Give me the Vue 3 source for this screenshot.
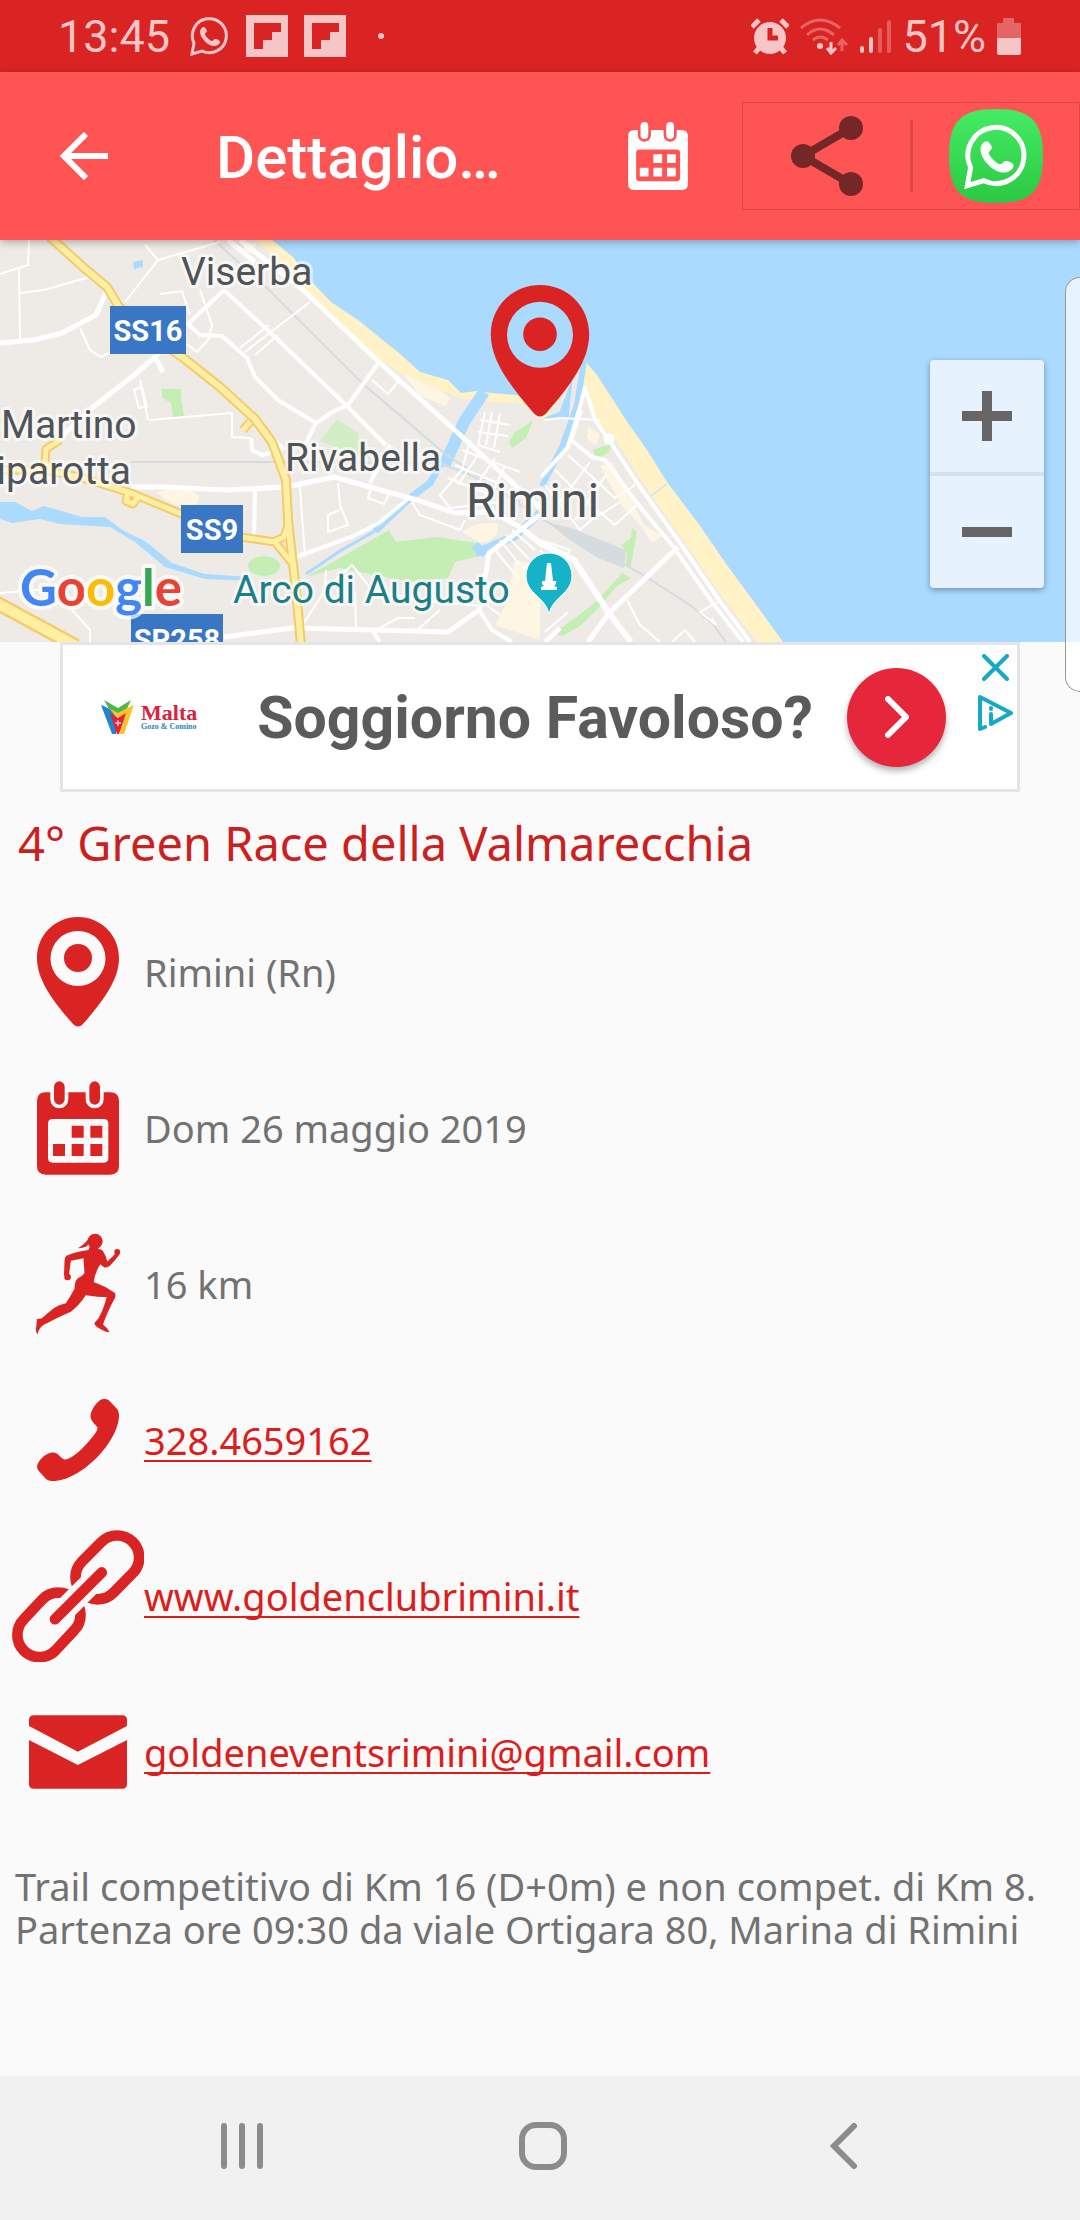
<template>
  <div class="page">
    <!-- shared icon shapes -->
    <svg class="sprite" aria-hidden="true">
      <symbol id="pin" viewBox="0 0 82 110">
        <path
          fill="currentColor"
          fill-rule="evenodd"
          d="M41 0C18 0 0 18 0 41C0 63 16 84 36 107Q41 112 46 107C66 84 82 63 82 41C82 18 64 0 41 0ZM41 14A27 27 0 1 1 41 69A27 27 0 1 1 41 14Z"
        />
        <circle cx="41" cy="41" r="14" fill="currentColor" />
      </symbol>
      <symbol id="calendar" viewBox="0 0 246 280">
        <path
          fill="currentColor"
          fill-rule="evenodd"
          d="M26 33H220Q246 33 246 59V254Q246 280 220 280H26Q0 280 0 254V59Q0 33 26 33ZM47 113Q33 113 33 127V230Q33 244 47 244H200Q214 244 214 230V127Q214 113 200 113Z"
        />
        <path class="cut" d="M67 16V54M173 16V54" stroke-width="54" stroke-linecap="round" />
        <path d="M67 16V54M173 16V54" stroke="currentColor" stroke-width="32" stroke-linecap="round" />
        <path
          fill="currentColor"
          d="M104 133h36v36h-36zM160 133h36v36h-36zM48 188h36v36h-36zM104 188h36v36h-36zM160 188h36v36h-36z"
        />
      </symbol>
      <symbol id="runner" viewBox="0 0 257 308">
        <circle cx="180" cy="25" r="23" fill="currentColor" />
        <circle cx="97" cy="133" r="10" fill="currentColor" />
        <circle cx="247" cy="57" r="9" fill="currentColor" />
        <path fill="currentColor" d="M164 12Q150 34 128 46Q144 46 156 40Q156 34 166 30Z" />
        <path
          fill="currentColor"
          d="M166 36L160 51Q122 56 95 68Q88 72 88 82L86 128H101L107 84L145 76L148 120Q146 128 126 138Q118 148 118 168Q106 190 92 212Q70 216 54 228L18 258L4 260L3 280Q-2 294 6 306Q10 288 24 278Q70 254 107 238Q134 216 152 188Q190 194 215 194Q206 230 190 258L178 272Q178 282 200 292Q214 300 224 300Q218 286 204 276Q216 240 240 196Q244 184 238 180Q210 160 176 148Q180 118 196 94L208 104Q216 106 224 100Q242 82 254 64L243 60Q232 74 217 86Q212 66 204 54Q200 48 190 48V36Z"
        />
      </symbol>
      <symbol id="phone" viewBox="0 0 245 245">
        <path
          fill="currentColor"
          d="M188 4C196 -1 208 -1 216 5L236 26C243 33 245 40 245 50C243 130 130 245 48 245C38 245 32 243 26 238L6 216C-1 208 -1 200 3 192C12 176 28 162 45 160C62 158 66 172 80 180C90 184 110 172 135 148C160 122 180 100 181 86C176 76 160 66 160 52C160 36 174 14 188 4Z"
        />
      </symbol>
      <symbol id="link" viewBox="0 0 394 395">
        <g fill="none" stroke="currentColor" stroke-width="32">
          <path d="M209 94L267 36A66 66 0 0 1 361 129L303 188A66 66 0 0 1 209 94Z" />
          <path d="M35 267L91 207A66 66 0 0 1 185 301L129 361A66 66 0 0 1 35 267Z" />
        </g>
        <path class="cut" d="M140 255L255 140" stroke-width="68" />
        <path d="M128 267L268 127" stroke="currentColor" stroke-width="32" stroke-linecap="round" />
      </symbol>
      <symbol id="mail" viewBox="0 0 293 220">
        <path
          fill="currentColor"
          d="M14 0H279Q293 0 293 14V32L146 109L0 32V14Q0 0 14 0ZM0 74L146 149L293 74V206Q293 220 279 220H14Q0 220 0 206Z"
        />
      </symbol>
      <symbol id="whatsapp" viewBox="0 0 40 40">
        <path d="M2 38L4 27A17 17 0 1 1 12 35Z" fill="none" stroke="currentColor" stroke-width="3" />
        <path
          fill="currentColor"
          d="M14 11C12 11 10 13 10 16C10 22 18 30 24 30C27 30 30 28 30 26C30 24 27 23 25 23C24 23 23 25 22 25C20 25 15 20 15 18C15 17 17 16 17 15C17 14 15 11 14 11Z"
        />
      </symbol>
      <symbol id="flip" viewBox="0 0 42 42">
        <path fill="currentColor" fill-rule="evenodd" d="M0 0H42V42H0ZM8 8V34H17V25H26V17H35V8Z" />
      </symbol>
    </svg>

    <div class="status-bar">
      <div class="status-left">
        <span>13:45</span>
        <svg class="st-whatsapp"><use href="#whatsapp" /></svg>
        <svg class="st-flip"><use href="#flip" /></svg>
        <svg class="st-flip"><use href="#flip" /></svg>
        <i class="st-dot"></i>
      </div>
      <div class="status-right">
        <svg width="38" height="37" viewBox="0 0 38 37" fill="currentColor">
          <path d="M8 30L4 35M30 30L34 35" stroke="currentColor" stroke-width="5" />
          <path d="M1 9L8 2M37 9L30 2" stroke="currentColor" stroke-width="5" />
          <circle cx="19" cy="20" r="16" />
          <path class="st-hands" d="M19 10V20H27" fill="none" stroke-width="5" />
        </svg>
        <svg width="48" height="37" viewBox="0 0 48 37" fill="none" stroke="currentColor" stroke-width="3">
          <g opacity="0.4">
            <path d="M1 10Q20 -6 40 10M7 17Q20 5 34 17M13 22Q20 16 28 22" />
            <path d="M42 33V22M38 27L42 22L47 27" />
          </g>
          <circle cx="20" cy="28" r="3" fill="currentColor" stroke="none" />
          <path d="M31 24V35M27 30L31 35L36 30" />
        </svg>
        <svg width="32" height="36" viewBox="0 0 32 36" stroke="currentColor" stroke-width="4" stroke-linecap="round">
          <path d="M3 30V33M12 21V33" />
          <path d="M21 12V33M30 4V33" opacity="0.35" />
        </svg>
        <span>51%</span>
        <svg width="24" height="37" viewBox="0 0 24 37" fill="currentColor">
          <path d="M6 0H17V5H24V20H0V5H6Z" opacity="0.4" />
          <path d="M0 20H24V35Q24 37 22 37H2Q0 37 0 35Z" />
        </svg>
      </div>
    </div>

    <header class="toolbar">
      <button class="tool back" aria-label="Indietro">
        <svg width="48" height="48" viewBox="0 0 48 48" fill="none" stroke="currentColor" stroke-width="6">
          <path d="M48 24H5M26 2L4 24L26 46" />
        </svg>
      </button>
      <h1>Dettaglio…</h1>
      <button class="tool cal" aria-label="Calendario">
        <svg><use href="#calendar" /></svg>
      </button>
      <div class="share-box">
        <button class="tool share" aria-label="Condividi">
          <svg width="72" height="80" viewBox="0 0 72 80" fill="currentColor">
            <path d="M60 12L12 40L60 68" fill="none" stroke="currentColor" stroke-width="8" />
            <circle cx="60" cy="12" r="12" />
            <circle cx="12" cy="40" r="12" />
            <circle cx="60" cy="68" r="12" />
          </svg>
        </button>
        <button class="tool whatsapp" aria-label="WhatsApp">
          <svg width="94" height="94" viewBox="0 0 94 94">
            <defs>
              <linearGradient id="green" x1="0" y1="0" x2="0" y2="1">
                <stop offset="0" stop-color="#45ec63" />
                <stop offset="1" stop-color="#2bc944" />
              </linearGradient>
            </defs>
            <path fill="url(#green)" d="M47 0C82 0 94 12 94 47C94 82 82 94 47 94C12 94 0 82 0 47C0 12 12 0 47 0Z" />
            <use href="#whatsapp" x="15" y="14" width="66" height="66" />
          </svg>
        </button>
      </div>
    </header>

    <main>
      <section class="map">
        <svg class="map-canvas" viewBox="0 0 1080 402" preserveAspectRatio="xMidYMid slice">
          <rect width="1080" height="402" fill="#abdaff" />
          <!-- beach, then land -->
          <path
            fill="#fff2c6"
            d="M0 0H272L293 17L310 40L331 62L358 80L379 97L399 113L420 132L448 140L461 153L476 151L491 153L517 155L545 175L585 121L597 135L626 180L647 210L667 242L698 283L729 328L760 370L783 402H0Z"
          />
          <path
            fill="#eeebe6"
            d="M0 0H255L293 33L312 60L379 120L413 140L458 157L472 160L492 162L520 163L545 180L583 122L584 140L593 177L616 200L643 243L678 293L719 353L757 402H0Z"
          />
          <g fill="#c5eeb4">
            <path d="M306 337L340 318L375 298L389 290L396 302L436 297L477 303L482 315L455 322L448 338L410 342L340 328Z" />
            <ellipse cx="264" cy="326" rx="16" ry="10" />
            <path d="M162 149H181V160L184 176L173 177L171 163L162 158Z" />
            <path d="M509 202L515 192L525 186L533 180L526 198L512 208Z" />
            <path d="M632 288L637 292L633 315L630 328L626 326L627 312L621 305L631 298Z" />
            <path d="M631 338L622 333L598 360L578 376L554 393L562 396L580 386L600 366L617 346Z" />
            <path d="M593 210L611 204L609 212L596 220Z" />
            <path d="M320 201L337 179L358 193L360 206L372 220L330 205Z" opacity="0.65" />
          </g>
          <g fill="#fff5e3">
            <path d="M156 252Q190 245 199 256Q200 270 172 264Z" />
            <path d="M462 292Q478 280 498 284Q500 300 480 303Z" />
            <path d="M403 134L440 150L450 158L446 166L420 156Z" />
            <path d="M248 2L256 4L252 14L242 10Z" />
            <path d="M588 187L600 194L596 205L587 198ZM600 226L612 222L628 252L644 285L662 296L652 303L640 285L622 266Z" />
            <path d="M515 320L540 325V400L495 385L505 365Z" />
          </g>
          <path fill="#d5dbde" d="M547 282L574 289L598 299L626 310L624 328L598 318L570 300Z" />
          <!-- rivers and canal -->
          <g fill="none" stroke="#abdaff" stroke-linejoin="round">
            <path
              fill="#abdaff"
              stroke="none"
              d="M0 262L15 262L32 271L44 266L82 277H105L124 291L145 301L172 323L205 334L250 337L250 341L205 339L165 327L135 302L110 287L60 284L40 279L12 283L0 279Z"
            />
            <path d="M306 334L340 311L375 291" stroke-width="3" />
            <path d="M375 291L410 258L430 243L442 222" stroke-width="7" />
            <path d="M444 226L464 182L484 152" stroke-width="12" />
            <path d="M540 273L515 296L476 313" stroke-width="8" />
            <path d="M584 121L577 165L562 207L542 246" stroke-width="6" />
            <path d="M545 178L560 172L572 140L568 178Z" fill="#abdaff" />
            <path d="M651 256L667 244" stroke-width="1" />
          </g>
          <path fill="#abdaff" d="M133 22L143 20V27L134 29ZM471 308L478 302L489 312L482 317Z" />
          <!-- railway -->
          <g fill="none" stroke="#d5dbde" stroke-width="2">
            <path d="M214 0L269 50L362 143L444 213L540 278L640 333L690 365L712 383L726 402" />
            <path d="M131 222H286L440 223L470 235L520 262" />
          </g>
          <!-- minor streets -->
          <g fill="none" stroke="#fff" stroke-width="2">
            <path d="M0 34L28 25L29 0M19 28L20 100M20 53L44 50L90 37M80 88L90 110L101 117L134 100" />
            <path d="M145 5L158 20L125 62M158 20L220 2M160 54L182 51L190 75M200 50L212 85L208 100L197 112L187 104" />
            <path d="M310 62L245 112M269 85L240 108M379 122L398 142L388 154L372 140M278 95L255 115" />
            <path d="M150 180L232 173V197L250 198M140 140L148 180M134 150L142 147L147 166L139 168Z" />
            <path d="M300 247L305 317M338 243L340 265L348 285L328 292V275L340 270" />
            <path d="M372 245L368 258L384 264L390 252M412 262L420 275L460 290L465 280" />
            <path d="M0 353L60 348L72 370L90 390V402" />
            <path d="M485 172L478 205L500 212M492 172L486 205M500 173L494 208M480 180L510 185M478 192L508 196M470 200L462 230L440 255L450 268L500 262" />
            <path d="M462 210L520 232M455 225L505 246M448 238L488 254M480 212L458 245M495 218L470 255M505 226L488 262" />
            <path d="M568 215L615 258L635 245M555 230L600 275L620 262M545 245L580 290L600 272M590 222L560 262M606 235L575 280M615 285L640 262M600 272L615 285" />
            <path d="M500 300L520 325M506 295L530 320M512 290L535 310M495 310L520 340M520 330L540 318M540 300L570 310L560 325M540 310L550 320" />
            <path d="M627 360L640 385L660 402M718 362L700 372L716 385L712 378M672 402L685 390L695 402M545 392L568 372M500 375L480 360" />
            <path d="M326 330L325 350M325 350L302 386M355 352L356 390M330 345L352 325L372 350L420 360L480 366M600 180L560 178L545 180" />
            <path d="M415 378H398L376 390M440 370L415 392" />
          </g>
          <!-- main streets -->
          <g fill="none" stroke="#fff" stroke-width="4" stroke-linejoin="round">
            <path d="M228 0L255 22M240 0L303 50L379 122L458 193L517 247L540 268" stroke-width="5" />
            <path d="M224 50L275 97L348 167L386 205" />
            <path d="M224 50L188 84L200 95L222 96L247 118L255 137L278 160L316 183L306 203" />
            <path d="M316 183L334 171L348 165L379 122" />
            <path d="M0 103L34 100L62 93L96 75L107 50" stroke-width="5" />
            <path d="M165 107L155 117L134 135L93 167L58 200M155 117L163 132" stroke-width="5" />
            <path d="M131 247L165 247L227 250L286 247L334 237L417 260L455 273L492 272L520 287" stroke-width="5" />
            <path d="M296 317L351 297L379 283L410 257M370 243L390 205" />
            <path d="M255 250L254 297M260 183L275 200L284 210M251 198L252 210L262 215L275 212" />
            <path d="M224 397L293 388L372 390L448 392L479 370L486 333L489 313L520 290L540 275" stroke-width="5" />
            <path d="M372 390L380 402M479 370L492 390L512 402" />
            <path d="M520 287L540 303L574 320L609 373L631 402" stroke-width="6" />
            <path d="M541 237L568 207L581 163L585 147L595 180L609 200L640 247L678 300L719 360L750 402" />
            <path d="M581 170L571 200L592 217L605 220L640 267L672 305L712 362L743 402" />
            <path d="M678 307L609 373L588 402M545 402L560 388" stroke-width="5" />
            <circle cx="609" cy="199" r="4" stroke-width="3" />
          </g>
          <!-- state roads -->
          <g fill="none" stroke-linejoin="round">
            <g stroke="#f3cb6b">
              <path :d="ss16" stroke-width="10" />
              <path :d="ss9" stroke-width="9" />
              <path d="M-5 362L76 406" stroke-width="15" />
            </g>
            <g stroke="#ffefa3">
              <path :d="ss16" stroke-width="6" />
              <path :d="ss9" stroke-width="5" />
              <path d="M-5 362L76 406" stroke-width="10" />
            </g>
          </g>
          <g class="badges">
            <rect x="110" y="66" width="76" height="48" />
            <rect x="181" y="265" width="62" height="48" />
            <rect x="131" y="374" width="92" height="48" />
            <text x="148" y="101">SS16</text>
            <text x="212" y="300">SS9</text>
            <text x="177" y="410">SP258</text>
          </g>
          <g class="places">
            <text x="181" y="45">Viserba</text>
            <text x="1" y="198">Martino</text>
            <text x="131" y="244" text-anchor="end">iparotta</text>
            <text x="285" y="231">Rivabella</text>
            <text x="466" y="277" class="city">Rimini</text>
            <text x="233" y="363" class="poi">Arco di Augusto</text>
          </g>
          <path
            fill="#15b2c8"
            stroke="#fff"
            stroke-width="1"
            d="M549 313C562 313 572 323 572 336C572 354 553 356 549 374C545 356 526 354 526 336C526 323 536 313 549 313Z"
          />
          <path fill="#fff" d="M547 323H551L553 341H556V344L554 346L557 347V350H541V347L544 346L542 344V341H545Z" />
          <text class="google" x="20" y="366">
            <tspan fill="#4285f4">G</tspan><tspan fill="#ea4335">o</tspan><tspan fill="#fbbc05">o</tspan><tspan fill="#4285f4">g</tspan><tspan fill="#34a853">l</tspan><tspan fill="#ea4335">e</tspan>
          </text>
          <use class="marker" href="#pin" x="490" y="45" width="100" height="132" />
        </svg>
        <div class="zoom">
          <button aria-label="Zoom avanti" @click="zoom++">
            <svg width="50" height="50" viewBox="0 0 50 50"><path d="M0 25H50M25 0V50" /></svg>
          </button>
          <button aria-label="Zoom indietro" @click="zoom--">
            <svg width="50" height="50" viewBox="0 0 50 50"><path d="M0 25H50" /></svg>
          </button>
        </div>
      </section>

      <aside class="ad">
        <div class="ad-brand">
          <svg width="34" height="34" viewBox="0 0 34 34">
            <path fill="#1f86c7" d="M0 5L15 14V34H11Z" />
            <path fill="#fbc52d" d="M33 5L19 14V34H23Z" />
            <path fill="#4db848" d="M3 0L17 8L30 0L25 11L17 16L9 11Z" />
            <path fill="#1f86c7" d="M1 5L12 11L17 16L12 20Z" />
            <path fill="#fbc52d" d="M9 9L17 13L32 5L24 20L15 17Z" />
            <path fill="#e0223c" d="M9 13L17 18L25 13L18 34H16Z" />
            <path stroke="#fff" stroke-width="1" d="M17 20V26M14 23H20" />
          </svg>
          <div class="ad-name">
            <b>Malta</b>
            <small>Gozo &amp; Comino</small>
          </div>
        </div>
        <strong class="ad-text">Soggiorno Favoloso?</strong>
        <button class="ad-go" aria-label="Apri">
          <svg width="24" height="42" viewBox="0 0 24 42"><path d="M3 3L21 21L3 39" /></svg>
        </button>
        <div class="ad-choices">
          <button aria-label="Chiudi">
            <svg width="27" height="27" viewBox="0 0 27 27" stroke-linecap="round"><path d="M2 2L25 25M25 2L2 25" /></svg>
          </button>
          <button aria-label="Informazioni">
            <svg width="35" height="36" viewBox="0 0 35 36" stroke-linejoin="round" stroke-linecap="round">
              <path d="M7 32L2 34V2L33 18L13 29V19M13 13V14" />
            </svg>
          </button>
        </div>
      </aside>

      <h2>{{ race.title }}</h2>

      <ul class="details">
        <li v-for="row in race.rows" :key="row.icon">
          <span class="icon"><svg :class="'ic-' + row.icon"><use :href="'#' + row.icon" /></svg></span>
          <a v-if="row.href" :href="row.href">{{ row.text }}</a>
          <span v-else>{{ row.text }}</span>
        </li>
      </ul>

      <p class="description">
        <template v-for="line in race.description" :key="line">{{ line }}<br /></template>
      </p>

      <div class="edge-handle"></div>
    </main>

    <nav class="nav-bar">
      <button aria-label="Recenti">
        <svg width="42" height="46" viewBox="0 0 42 46"><path d="M3 3V43M21 3V43M39 3V43" /></svg>
      </button>
      <button aria-label="Home">
        <svg width="48" height="48" viewBox="0 0 48 48"><rect x="3" y="3" width="42" height="42" rx="14" /></svg>
      </button>
      <button aria-label="Indietro">
        <svg width="27" height="46" viewBox="0 0 27 46"><path d="M24 3L4 23L24 43" /></svg>
      </button>
    </nav>
  </div>
</template>

<script setup>
import { reactive, ref } from 'vue'

const zoom = ref(12)

// strade statali disegnate due volte: bordo e riempimento
const ss16 =
  'M50 -3L83 27L107 47L119 67L172 110L186 120L220 147L255 179L272 202L286 240L288 280L291 307L296 350L301 405'
const ss9 =
  'M-3 230H45L79 237L131 253L179 273L241 297L275 302L291 322M60 200L46 209L45 222L56 232M128 253L126 261L133 264L138 257M288 285L284 297L275 301M250 182L243 190'

const race = reactive({
  title: '4° Green Race della Valmarecchia',
  rows: [
    { icon: 'pin', text: 'Rimini (Rn)' },
    { icon: 'calendar', text: 'Dom 26 maggio 2019' },
    { icon: 'runner', text: '16 km' },
    { icon: 'phone', text: '328.4659162', href: 'tel:3284659162' },
    { icon: 'link', text: 'www.goldenclubrimini.it', href: 'http://www.goldenclubrimini.it' },
    { icon: 'mail', text: 'goldeneventsrimini@gmail.com', href: 'mailto:goldeneventsrimini@gmail.com' },
  ],
  description: [
    'Trail competitivo di Km 16 (D+0m) e non compet. di Km 8.',
    'Partenza ore 09:30 da viale Ortigara 80, Marina di Rimini',
  ],
})
</script>

<style>
body {
  margin: 0;
  background: #fafafa;
}
</style>

<style scoped>
.page {
  --cut: #fafafa;
  display: flex;
  flex-direction: column;
  min-height: 100vh;
  font-family: Roboto, sans-serif;
}

svg {
  display: block;
  flex: none;
}

button {
  display: flex;
  align-items: center;
  justify-content: center;
  padding: 0;
  border: 0;
  background: none;
  color: inherit;
  cursor: pointer;
}

.sprite {
  position: absolute;
  width: 0;
  height: 0;
}

.cut {
  stroke: var(--cut);
}

/* status bar */
.status-bar {
  display: flex;
  justify-content: space-between;
  align-items: center;
  height: 72px;
  padding: 0 59px 0 58px;
  background: #da2424;
  color: #f6c5c5;
  font-size: 45px;
}

.status-left,
.status-right {
  display: flex;
  align-items: center;
}

.status-left {
  gap: 16px;
}

.status-right {
  gap: 11px;
}

.st-whatsapp {
  width: 40px;
  height: 40px;
  margin-left: 4px;
}

.st-flip {
  width: 42px;
  height: 42px;
}

.st-dot {
  width: 6px;
  height: 6px;
  margin-left: 16px;
  border-radius: 50%;
  background: currentColor;
}

.st-hands {
  stroke: #da2424;
}

/* toolbar */
.toolbar {
  --cut: #ff5454;
  position: relative;
  z-index: 1;
  display: flex;
  align-items: center;
  height: 168px;
  background: #ff5454;
  color: #fff;
  box-shadow: 0 2px 8px rgba(0, 0, 0, 0.3);
}

.back {
  width: 168px;
  height: 168px;
}

h1 {
  flex: 1;
  margin: 0 0 0 48px;
  padding-top: 4px;
  font-size: 60px;
  font-weight: 500;
  line-height: 72px;
}

.cal {
  width: 168px;
  height: 168px;
}

.cal svg {
  width: 60px;
  height: 68px;
}

.share-box {
  display: flex;
  align-items: center;
  box-sizing: border-box;
  width: 338px;
  height: 108px;
  border: 1px solid #dc4848;
}

.share {
  box-sizing: border-box;
  flex: 1;
  height: 72px;
  border-right: 3px solid #dc4848;
  color: #752627;
}

.whatsapp {
  width: 166px;
  height: 106px;
}

/* map */
main {
  position: relative;
  flex: 1;
}

.map {
  position: relative;
  height: 402px;
}

.map-canvas {
  width: 100%;
  height: 100%;
}

.badges rect {
  fill: #3977c5;
}

.badges text {
  fill: #fff;
  font-size: 29px;
  font-weight: 700;
  text-anchor: middle;
}

.places text {
  fill: #4f5459;
  font-size: 39px;
  stroke: rgba(255, 255, 255, 0.6);
  stroke-width: 6px;
  stroke-linejoin: round;
  paint-order: stroke;
}

.places .city {
  font-size: 48px;
}

.places .poi {
  fill: #1b7f88;
}

.google {
  font-family: Lato, sans-serif;
  font-size: 51px;
  font-weight: 700;
  stroke: rgba(255, 255, 255, 0.7);
  stroke-width: 8px;
  stroke-linejoin: round;
  paint-order: stroke;
}

.marker {
  color: #da2424;
}

.zoom {
  position: absolute;
  right: 36px;
  bottom: 54px;
  width: 114px;
  border-radius: 4px;
  background: #e6f3ff;
  box-shadow: 0 2px 6px rgba(0, 0, 0, 0.35);
}

.zoom button {
  width: 100%;
  height: 112px;
}

.zoom button + button {
  box-sizing: content-box;
  border-top: 4px solid #d5e2ed;
}

.zoom path {
  stroke: #666;
  stroke-width: 10px;
}

/* advert */
.ad {
  display: flex;
  align-items: center;
  box-sizing: border-box;
  height: 150px;
  margin: 0 60px;
  padding: 0 4px 0 38px;
  border: 3px solid #e5e5e5;
  background: #fff;
}

.ad-brand {
  display: flex;
  align-items: center;
  gap: 6px;
  font-family: 'Liberation Serif', serif;
}

.ad-name {
  display: flex;
  flex-direction: column;
}

.ad-name b {
  color: #d9223f;
  font-size: 22px;
  line-height: 20px;
}

.ad-name small {
  color: #2a86bd;
  font-size: 8px;
  font-weight: 700;
  line-height: 8px;
}

.ad-text {
  flex: 1;
  margin-left: 60px;
  color: #5b5b5b;
  font-size: 59px;
  font-weight: 700;
  white-space: nowrap;
}

.ad-go {
  width: 99px;
  height: 99px;
  border-radius: 50%;
  background: #e5263b;
  box-shadow: 0 4px 6px rgba(0, 0, 0, 0.3);
}

.ad-go path {
  fill: none;
  stroke: #fff;
  stroke-width: 6px;
  stroke-linecap: round;
}

.ad-choices {
  display: flex;
  flex-direction: column;
  align-items: center;
  align-self: flex-start;
  gap: 14px;
  margin: 9px 0 0 32px;
}

.ad-choices path {
  fill: none;
  stroke: #14aac6;
  stroke-width: 4px;
}

/* race details */
h2,
.details,
.description {
  margin: 0;
  font-family: 'Noto Sans', sans-serif;
}

h2 {
  padding: 19px 18px;
  color: #cc1f20;
  font-size: 47px;
  font-weight: 400;
  line-height: 64px;
}

.details {
  padding: 0;
  list-style: none;
  color: #727272;
  font-size: 38px;
}

.details li {
  display: flex;
  align-items: center;
  height: 156px;
}

.details a {
  color: #dd1c1c;
  text-decoration-thickness: 2px;
  text-underline-offset: 5px;
  text-decoration-skip-ink: none;
}

.icon {
  display: flex;
  justify-content: center;
  width: 132px;
  margin-left: 12px;
  color: #da2424;
}

.ic-pin {
  width: 82px;
  height: 110px;
}

.ic-calendar {
  width: 82px;
  height: 94px;
}

.ic-runner {
  width: 86px;
  height: 102px;
}

.ic-phone {
  width: 82px;
  height: 82px;
}

.ic-link {
  width: 132px;
  height: 132px;
}

.ic-mail {
  width: 98px;
  height: 74px;
}

.description {
  padding: 35px 15px;
  color: #727272;
  font-size: 38px;
  line-height: 43px;
  white-space: nowrap;
}

/* edge panel handle, half off the screen */
.edge-handle {
  position: absolute;
  top: 37px;
  right: 0;
  width: 14px;
  height: 413px;
  border: 1px solid #999;
  border-right: 0;
  border-radius: 20px 0 0 20px;
  background: rgba(255, 255, 255, 0.7);
}

/* navigation bar */
.nav-bar {
  display: flex;
  justify-content: center;
  height: 144px;
  padding-left: 6px;
  background: #f1f1f1;
}

.nav-bar button {
  width: 28%;
  padding-bottom: 4px;
}

.nav-bar path,
.nav-bar rect {
  fill: none;
  stroke: #8c8c8c;
  stroke-width: 6px;
  stroke-linecap: round;
}
</style>
